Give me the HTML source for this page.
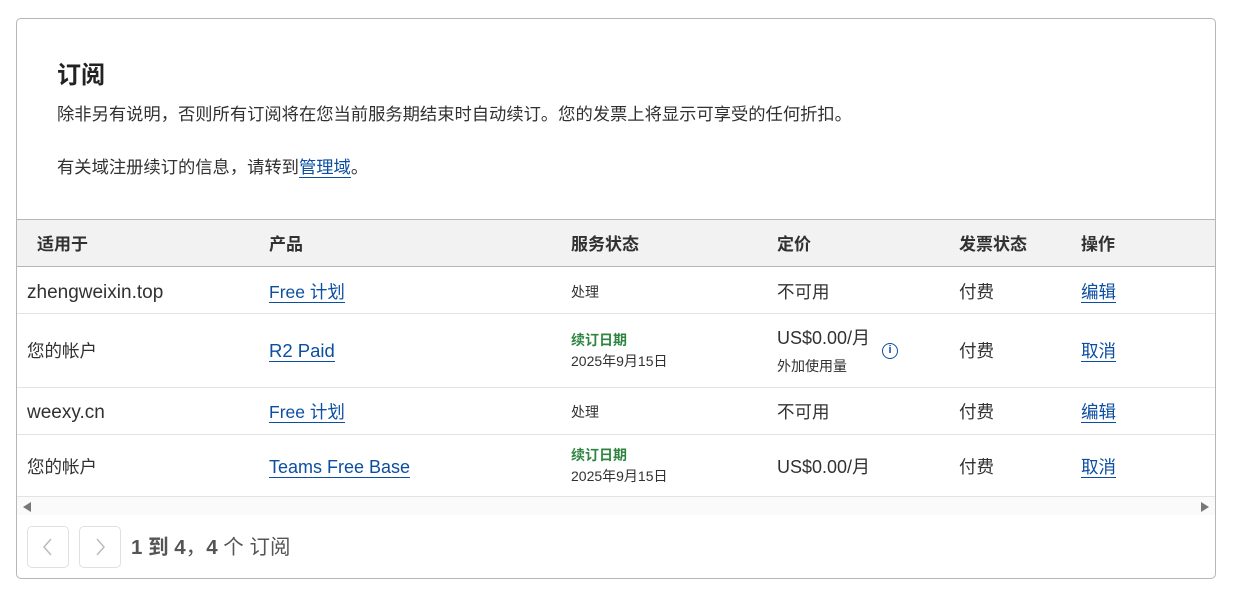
<!DOCTYPE html>
<html><head><meta charset="utf-8"><style>
*{margin:0;padding:0;box-sizing:border-box}
body{width:1234px;height:600px;background:#fff;font-family:"Liberation Sans","Noto Sans CJK SC",sans-serif;color:#313131;position:relative;overflow:hidden}
.card{position:absolute;left:16px;top:18px;width:1200px;height:561px;border:1px solid #b6b6b6;border-radius:5px}
.a{position:absolute;white-space:nowrap}
.lk{color:#0b4ea2;text-decoration:none;border-bottom:1px solid #0b4ea2;line-height:20px;display:inline-block}
.hdr{position:absolute;left:0;top:200px;width:1198px;height:48px;background:#f2f2f2;border-top:1px solid #b6b6b6;border-bottom:1px solid #b6b6b6}
.line{position:absolute;left:0;width:1198px;height:1px;background:#e3e3e3}
.th{font-weight:bold;font-size:17px;top:214px;line-height:24px}
.td{font-size:17.5px;line-height:24px}
.sm{font-size:14px;line-height:20px}
.g{color:#2e8540;font-weight:bold;font-size:14px;line-height:20px}
.btn{position:absolute;top:507px;width:42px;height:42px;border:1px solid #e0e0e0;border-radius:5px}
</style></head><body>
<div class="card">
<div class="a" style="left:40px;top:42px;font-size:24px;line-height:30px;font-weight:bold;color:#222">订阅</div>
<div class="a" style="left:40px;top:83px;font-size:17.3px;line-height:24px">除非另有说明，否则所有订阅将在您当前服务期结束时自动续订。您的发票上将显示可享受的任何折扣。</div>
<div class="a" style="left:40px;top:136px;font-size:17.3px;line-height:24px">有关域注册续订的信息，请转到<span class="lk">管理域</span>。</div>
<div class="hdr"></div>
<div class="a th" style="left:20px">适用于</div>
<div class="a th" style="left:252px">产品</div>
<div class="a th" style="left:554px">服务状态</div>
<div class="a th" style="left:760px">定价</div>
<div class="a th" style="left:942px">发票状态</div>
<div class="a th" style="left:1064px">操作</div>

<div class="a td" style="left:10px;top:262px;font-size:19px">zhengweixin.top</div>
<div class="a td" style="left:252px;top:261px"><span class="lk">Free 计划</span></div>
<div class="a sm" style="left:554px;top:263px">处理</div>
<div class="a td" style="left:760px;top:261px">不可用</div>
<div class="a td" style="left:942px;top:261px">付费</div>
<div class="a td" style="left:1064px;top:261px"><span class="lk">编辑</span></div>
<div class="line" style="top:294px"></div>

<div class="a td" style="left:10px;top:320px">您的帐户</div>
<div class="a td" style="left:252px;top:320px;font-size:18.5px"><span class="lk">R2 Paid</span></div>
<div class="a g" style="left:554px;top:311px">续订日期</div>
<div class="a sm" style="left:554px;top:332px">2025年9月15日</div>
<div class="a td" style="left:760px;top:307px;font-size:18px">US$0.00/月</div>
<div class="a sm" style="left:760px;top:337px">外加使用量</div>
<div class="a" style="left:865px;top:324px;width:16px;height:16px;border:1.5px solid #0b4ea2;border-radius:50%;color:#0b4ea2;font-size:11px;text-align:center;line-height:13px;font-weight:bold">i</div>
<div class="a td" style="left:942px;top:320px">付费</div>
<div class="a td" style="left:1064px;top:320px"><span class="lk">取消</span></div>
<div class="line" style="top:368px"></div>

<div class="a td" style="left:10px;top:382px;font-size:19px">weexy.cn</div>
<div class="a td" style="left:252px;top:381px"><span class="lk">Free 计划</span></div>
<div class="a sm" style="left:554px;top:383px">处理</div>
<div class="a td" style="left:760px;top:381px">不可用</div>
<div class="a td" style="left:942px;top:381px">付费</div>
<div class="a td" style="left:1064px;top:381px"><span class="lk">编辑</span></div>
<div class="line" style="top:415px"></div>

<div class="a td" style="left:10px;top:436px">您的帐户</div>
<div class="a td" style="left:252px;top:436px;font-size:18px"><span class="lk">Teams Free Base</span></div>
<div class="a g" style="left:554px;top:426px">续订日期</div>
<div class="a sm" style="left:554px;top:447px">2025年9月15日</div>
<div class="a td" style="left:760px;top:436px;font-size:18px">US$0.00/月</div>
<div class="a td" style="left:942px;top:436px">付费</div>
<div class="a td" style="left:1064px;top:436px"><span class="lk">取消</span></div>
<div class="line" style="top:477px"></div>
<div class="a" style="left:0;top:478px;width:1198px;height:18px;background:#fafafa"></div>
<div class="a" style="left:6px;top:483px;width:0;height:0;border-top:5px solid transparent;border-bottom:5px solid transparent;border-right:8px solid #777"></div>
<div class="a" style="left:1184px;top:483px;width:0;height:0;border-top:5px solid transparent;border-bottom:5px solid transparent;border-left:8px solid #777"></div>

<div class="btn" style="left:10px"><svg width="40" height="40" viewBox="0 0 40 40"><path d="M23 12 L16 20 L23 28" fill="none" stroke="#bbb" stroke-width="1.5"/></svg></div>
<div class="btn" style="left:62px"><svg width="40" height="40" viewBox="0 0 40 40"><path d="M17 12 L24 20 L17 28" fill="none" stroke="#bbb" stroke-width="1.5"/></svg></div>
<div class="a" style="left:114px;top:516px;font-size:20.5px;line-height:26px;color:#555"><b>1 到 4</b>，<b>4</b> 个 订阅</div>
</div>
</body></html>
